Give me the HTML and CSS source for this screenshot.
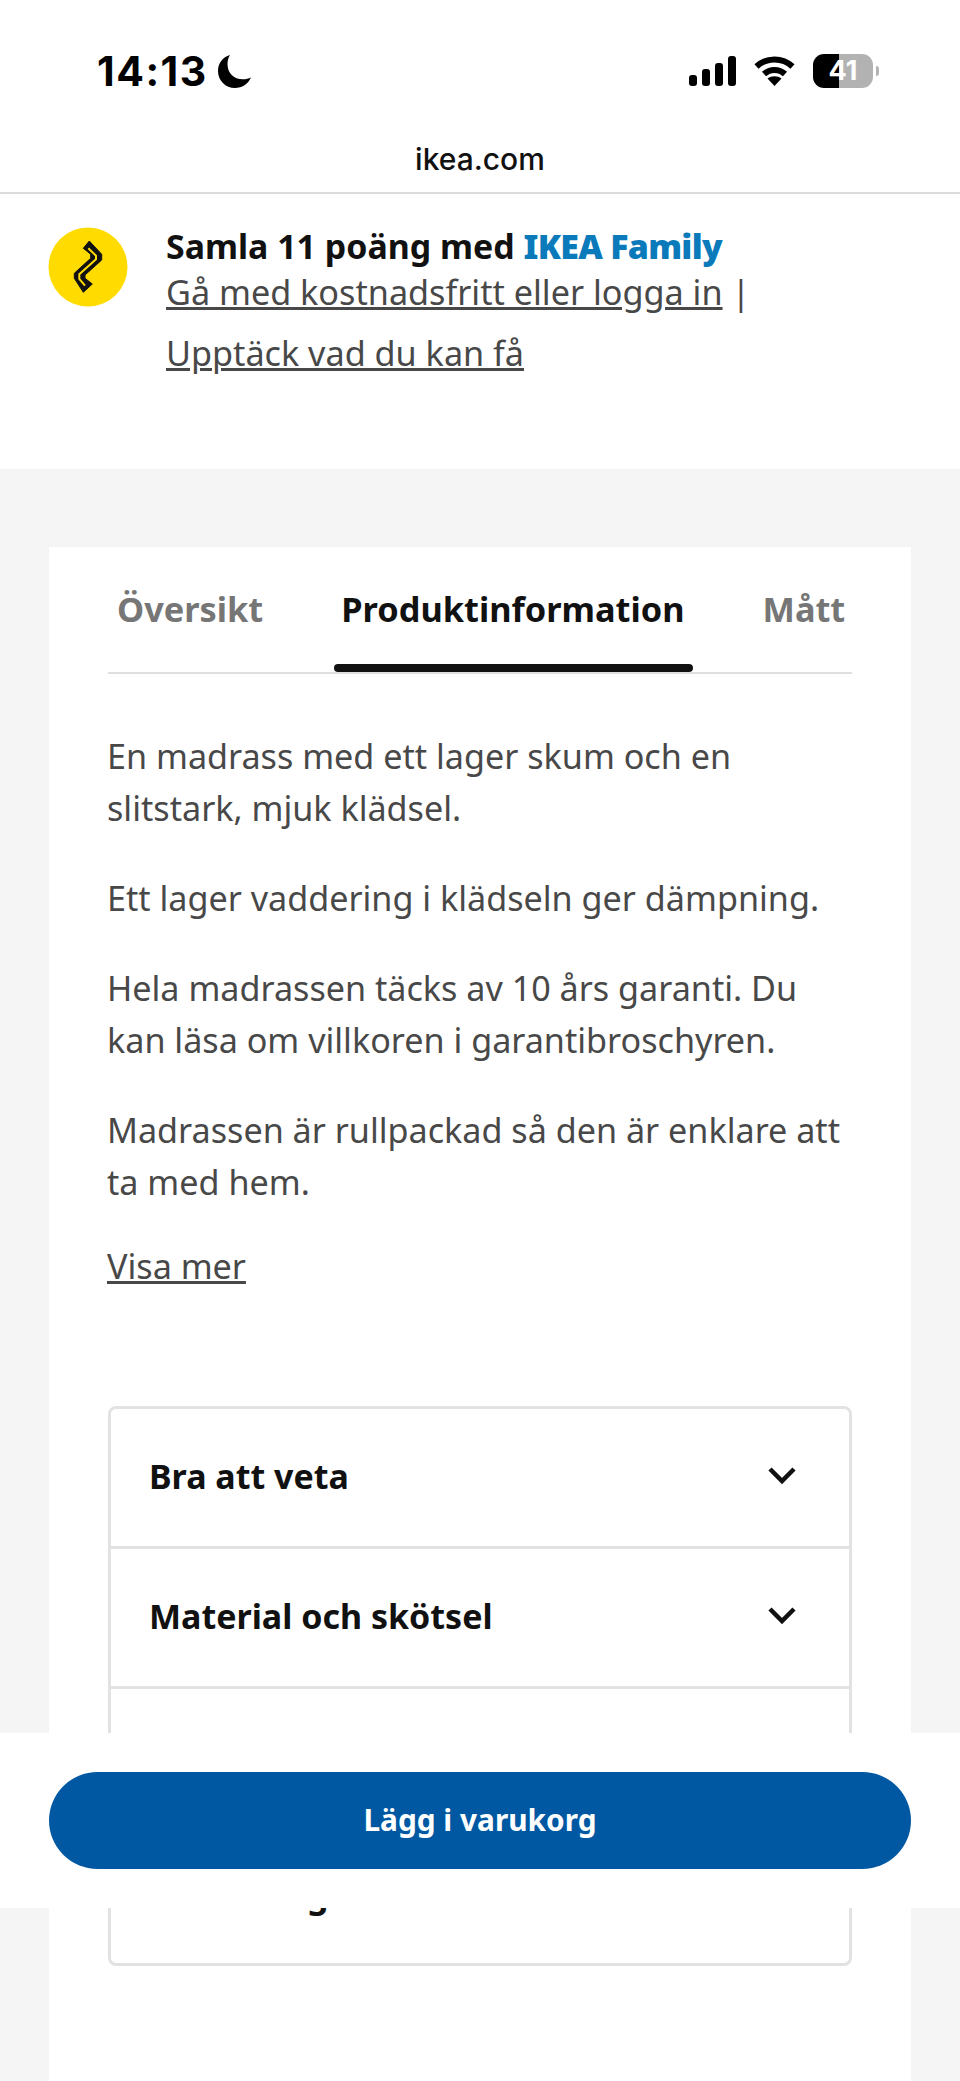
FILE: index.html
```html
<!DOCTYPE html>
<html>
	<head>
		<meta charset="UTF-8">
		<title>ikea.com</title>
		<link rel="stylesheet" href="styles.css">
	</head>
	<body>
		<div class="status">
			<div class="clock">
				<span>14:13</span>
				<svg class="moon" width="33" height="34" viewBox="0 0 33 34"><path d="M12 1C4.500 3 0 9.500 0 17c0 9.500 7.500 17 17 17 7 0 13-4 16-10.500-2.500 1.200-5 1.800-8 1.800C15.500 25.300 9.500 19 9.500 10c0-3.200.8-6.300 2.500-9z"/></svg>
			</div>
			<div class="sys">
				<div class="signal"><i class="b1"></i><i class="b2"></i><i class="b3"></i><i class="b4"></i></div>
				<svg class="wifi" width="41" height="30" viewBox="0 0 41 30"><path d="M2.500 10.500C12.500 1 28.500 1 38.500 10.500" fill="none" stroke="#000" stroke-width="6"/><path d="M10 18c6-5.500 15-5.500 21 0" fill="none" stroke="#000" stroke-width="6"/><path d="M13.500 22.500c4-3 10-3 14 0L20.500 30z"/></svg>
				<div class="battery"><span>41</span></div>
			</div>
		</div>
		<div class="url">ikea.com</div>

		<div class="family">
			<svg class="logo" width="80" height="80" viewBox="0 0 80 80">
				<circle cx="40" cy="40" r="39.500" fill="#ffdb00"/>
				<path d="M41.300 14L53.700 27.300V33L37 48v3.300L44.300 57l-9 8.300-9-14v-5L42.700 31.300v-4l-7.400-6z" fill="#111" stroke="#111" stroke-linejoin="round"/>
				<path d="M40.300 21.300L48 28.700v3.600L31.300 47.300V52l5.700 6.700" fill="none" stroke="#ffdb00" stroke-width="2"/>
			</svg>
			<div class="family-txt">
				<div class="family-title">Samla 11 poäng med <b>IKEA Family</b></div>
				<div class="family-links"><a href="#">Gå med kostnadsfritt eller logga in</a> |<br><a href="#">Upptäck vad du kan få</a></div>
			</div>
		</div>

		<div class="main">
			<div class="card">
				<div class="tabs">
					<div class="tab">Översikt</div>
					<div class="tab on">Produktinformation</div>
					<div class="tab">Mått</div>
				</div>
				<div class="desc">
					<p>En madrass med ett lager skum och en slitstark, mjuk klädsel.</p>
					<p>Ett lager vaddering i klädseln ger dämpning.</p>
					<p>Hela madrassen täcks av 10 års garanti. Du kan läsa om villkoren i garantibroschyren.</p>
					<p>Madrassen är rullpackad så den är enklare att ta med hem.</p>
				</div>
				<a class="more" href="#">Visa mer</a>
				<div class="acc">
					<div class="acc-row"><span>Bra att veta</span>
						<svg width="30" height="20" viewBox="0 0 30 20"><path d="M3 3l12 12L27 3" fill="none" stroke="#111" stroke-width="4.500"/></svg>
					</div>
					<div class="acc-row"><span>Material och skötsel</span>
						<svg width="30" height="20" viewBox="0 0 30 20"><path d="M3 3l12 12L27 3" fill="none" stroke="#111" stroke-width="4.500"/></svg>
					</div>
					<div class="acc-row"></div>
					<div class="acc-row"><span>Montering</span></div>
				</div>
			</div>
		</div>

		<div class="buybar"><button class="buy">Lägg i varukorg</button></div>
	</body>
</html>
```

FILE: styles.css
```css
*{margin:0;padding:0;box-sizing:border-box;}
html,body{height:2081px;overflow:hidden;}
body{position:relative;background:#fff;color:#484848;font-family:"Noto Sans","Open Sans",sans-serif;}
a{color:#484848;}

.status{height:142px;padding:54px 87px 0 97px;display:flex;justify-content:space-between;align-items:flex-start;color:#000;}
.clock{display:flex;align-items:center;gap:10px;height:34px;font-family:Inter,sans-serif;font-weight:700;font-size:41px;letter-spacing:1.5px;}
.sys{display:flex;align-items:center;height:34px;}
.signal{display:flex;align-items:flex-end;gap:5px;height:30px;margin-right:18px;}
.signal i{display:block;width:8px;background:#000;border-radius:3px;}
.b1{height:11px;}
.b2{height:17px;}
.b3{height:23px;}
.b4{height:30px;}
.wifi{margin-right:18px;}
.battery{position:relative;width:60px;height:34px;border-radius:11px;background:linear-gradient(90deg,#000 43%,#b2b2b2 43%);color:#fff;font:700 27px/34px Inter,sans-serif;text-align:center;}
.battery:after{content:"";position:absolute;right:-6px;top:12px;width:3px;height:10px;background:#b2b2b2;border-radius:0 3px 3px 0;}

.url{height:52px;border-bottom:2px solid #dcdcdc;text-align:center;color:#111;font-family:Inter,sans-serif;font-weight:500;font-size:30px;line-height:34px;}

.family{height:275px;padding:33px 48px 0;display:flex;gap:38px;}
.logo{flex:none;}
.family-txt{margin-top:-3px;}
.family-title{font-size:33.9px;line-height:45px;font-weight:700;color:#111;}
.family-title b{color:#0a7aba;letter-spacing:-.7px;}
.family-links{font-size:34.2px;line-height:61px;margin-top:-8px;}

.main{background:#f5f5f5;padding:78px 49px 0;height:1612px;}
.card{background:#fff;height:100%;padding:0 59px;}
.tabs{display:flex;gap:61px;height:127px;padding-top:37px;border-bottom:2px solid #dfdfdf;white-space:nowrap;}
.tab{position:relative;height:88px;padding:0 8px 0 9px;font-size:34.35px;line-height:50px;font-weight:700;color:#767676;}
.tab.on{color:#111;}
.tab.on:after{content:"";position:absolute;left:2px;right:0;bottom:0;height:8px;background:#111;border-radius:4px;}

.desc{padding-top:56px;margin-left:-1px;font-size:34.15px;line-height:52px;}
.desc p{margin-bottom:38px;}
.more{display:inline-block;margin-left:-1px;font-size:34.15px;line-height:52px;margin-top:-6px;}

.acc{margin-top:114px;border:3px solid #e2e2e2;border-radius:8px;}
.acc-row{height:140px;padding:0 52px 3px 38px;display:flex;align-items:center;justify-content:space-between;border-bottom:3px solid #e2e2e2;color:#111;font-size:34px;font-weight:700;}
.acc-row:last-child{height:134px;border-bottom:0;}

.buybar{position:absolute;left:0;right:0;top:1733px;height:175px;background:#fff;padding:39px 49px 0;}
.buy{display:block;width:100%;height:97px;padding-bottom:2px;border:0;border-radius:49px;background:#0058a3;color:#fff;font-family:"Noto Sans",sans-serif;font-weight:700;font-size:29.8px;}
```
